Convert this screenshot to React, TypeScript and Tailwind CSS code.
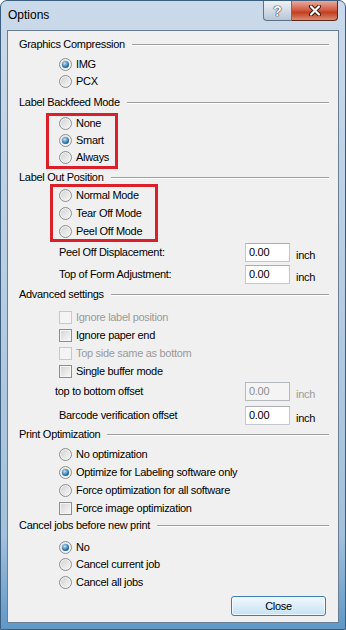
import React from "react";

function Radio({ checked = false }: { checked?: boolean }) {
  return (
    <span className="flex h-[13px] w-[13px] shrink-0 items-center justify-center rounded-full border border-[#8c8e90] bg-[linear-gradient(135deg,#cfd0d1,#f9f9f9)] shadow-[inset_0_0_0_1px_#f3f3f3]">
      {checked && (
        <span className="h-[7px] w-[7px] rounded-full bg-[radial-gradient(circle_at_40%_35%,#bfe6fa,#3077ad_55%,#123e63)]" />
      )}
    </span>
  );
}

function Check({ disabled = false }: { disabled?: boolean }) {
  return (
    <span
      className={
        disabled
          ? "h-[13px] w-[13px] shrink-0 border border-[#c8c8c8] bg-[#f4f4f4]"
          : "h-[13px] w-[13px] shrink-0 border border-[#8c8e90] bg-[linear-gradient(135deg,#d3d3d3,#fafafa)] shadow-[inset_0_0_0_1px_#f3f3f3]"
      }
    />
  );
}

function Header({ label, className = "" }: { label: string; className?: string }) {
  return (
    <div className={`flex h-[17px] items-center pl-[11px] pr-[9px] ${className}`}>
      <span className="whitespace-nowrap">{label}</span>
      <div className="ml-[7px] h-[2px] flex-1 border-t border-b border-t-[#a0a0a0] border-b-white" />
    </div>
  );
}

function RadioRow({ label, checked, className = "" }: { label: string; checked?: boolean; className?: string }) {
  return (
    <div className={`flex h-[17px] items-center pl-[51px] ${className}`}>
      <Radio checked={checked} />
      <span className="ml-[4px] whitespace-nowrap">{label}</span>
    </div>
  );
}

function CheckRow({ label, disabled, className = "" }: { label: string; disabled?: boolean; className?: string }) {
  return (
    <div className={`flex h-[17px] items-center pl-[51px] ${className}`}>
      <Check disabled={disabled} />
      <span className={`ml-[4px] whitespace-nowrap ${disabled ? "text-[#9a9a9a]" : ""}`}>{label}</span>
    </div>
  );
}

function InputRow({
  label,
  disabled,
  indent = 51,
  className = "",
}: {
  label: string;
  disabled?: boolean;
  indent?: number;
  className?: string;
}) {
  return (
    <div className={`flex h-[20px] items-center ${indent === 51 ? "pl-[51px]" : "pl-[47px]"} ${className}`}>
      <span className={`whitespace-nowrap ${indent === 51 ? "w-[186px]" : "w-[190px]"}`}>{label}</span>
      <div
        className={
          disabled
            ? "flex h-[19px] w-[45px] items-center border border-[#b5b9bd] bg-[#f4f4f4] pl-[3px] text-[#8d8d8d]"
            : "flex h-[19px] w-[45px] items-center border border-[#c5c9cf] border-t-[#abadb3] bg-white pl-[3px]"
        }
      >
        0.00
      </div>
      <span className={`ml-[6px] mt-[6px] ${disabled ? "text-[#9a9a9a]" : ""}`}>inch</span>
    </div>
  );
}

function RedBox({ className }: { className: string }) {
  return <div className={`pointer-events-none absolute border-[3px] border-[#dc2029] ${className}`} />;
}

export default function App() {
  return (
    <div className="h-[630px] w-[346px] overflow-hidden bg-white font-['Liberation_Sans',Arial,sans-serif]">
      <div className="flex h-full w-full flex-col rounded-t-[7px] border border-[#3d5f7f] bg-[linear-gradient(180deg,#cbdaea_0%,#b7cde2_45%,#a3c1dc_85%,#5f98c6_100%)]">
        {/* title bar */}
        <div className="flex h-[29px] items-start justify-between pl-[7px] pr-[7px]">
          <span className="mt-[5px] text-[12px] text-black">Options</span>
          <div className="flex">
            <div className="flex h-[20px] w-[29px] items-center justify-center rounded-bl-[4px] border border-t-0 border-[#5f7286] bg-[linear-gradient(180deg,#eef2f6,#d3dce6_50%,#b6c6d7)]">
              <span className="text-[14px] font-bold leading-none text-white [text-shadow:0_0_1px_#2a3440,0_0_1px_#2a3440,0_0_1px_#2a3440]">
                ?
              </span>
            </div>
            <div className="flex h-[20px] w-[46px] items-center justify-center rounded-br-[4px] border border-l-0 border-t-0 border-[#5e2518] bg-[linear-gradient(180deg,#e9ab9c,#d2604a_45%,#c2401f_60%,#d98a70)]">
              <svg width="14" height="11" viewBox="0 0 14 11">
                <path d="M3 1.5 L11 9.5 M11 1.5 L3 9.5" stroke="#3b160d" strokeWidth="4" strokeLinecap="round" />
                <path d="M3 1.5 L11 9.5 M11 1.5 L3 9.5" stroke="#ffffff" strokeWidth="2.2" strokeLinecap="round" />
              </svg>
            </div>
          </div>
        </div>

        {/* client area */}
        <div className="mx-[6px] h-[593px] border border-[#6a7e94] bg-[#f0f0f0] pt-[5px] text-[11px] tracking-[-0.3px] text-black">
          <Header label="Graphics Compression" />
          <RadioRow label="IMG" checked className="mt-[3px]" />
          <RadioRow label="PCX" />

          <Header label="Label Backfeed Mode" className="mt-[4px]" />
          <div className="relative mt-[4px]">
            <RadioRow label="None" />
            <RadioRow label="Smart" checked />
            <RadioRow label="Always" />
            <RedBox className="-top-[2px] -bottom-[3px] left-[38px] w-[72px]" />
          </div>

          <Header label="Label Out Position" className="mt-[3px]" />
          <div className="relative mt-[1px]">
            <RadioRow label="Normal Mode" />
            <RadioRow label="Tear Off Mode" className="mt-[1px]" />
            <RadioRow label="Peel Off Mode" className="mt-[1px]" />
            <RedBox className="-top-[3px] -bottom-[2px] left-[42px] w-[108px]" />
          </div>

          <InputRow label="Peel Off Displacement:" className="mt-[2px]" />
          <InputRow label="Top of Form Adjustment:" className="mt-[2px]" />

          <Header label="Advanced settings" className="mt-[2px]" />
          <CheckRow label="Ignore label position" disabled className="mt-[6px]" />
          <CheckRow label="Ignore paper end" className="mt-[1px]" />
          <CheckRow label="Top side same as bottom" disabled className="mt-[1px]" />
          <CheckRow label="Single buffer mode" className="mt-[1px]" />
          <InputRow label="top to bottom offset" disabled indent={47} className="mt-[1px]" />
          <InputRow label="Barcode verification offset" className="mt-[4px]" />

          <Header label="Print Optimization" className="mt-[1px]" />
          <RadioRow label="No optimization" className="mt-[3px]" />
          <RadioRow label="Optimize for Labeling software only" checked className="mt-[1px]" />
          <RadioRow label="Force optimization for all software" className="mt-[1px]" />
          <CheckRow label="Force image optimization" className="mt-[1px]" />

          <Header label="Cancel jobs before new print" />
          <RadioRow label="No" checked className="mt-[5px]" />
          <RadioRow label="Cancel current job" />
          <RadioRow label="Cancel all jobs" className="mt-[1px]" />

          <div className="mt-[5px] flex justify-end pr-[12px]">
            <button className="flex h-[20px] w-[95px] items-center justify-center rounded-[3px] border border-[#3c7fb1] bg-[linear-gradient(180deg,#f1f8fd,#dcedf8_50%,#c6e2f4)] shadow-[inset_0_0_0_1px_#ffffffaa] text-[11px] text-black">
              Close
            </button>
          </div>
        </div>
      </div>
    </div>
  );
}
